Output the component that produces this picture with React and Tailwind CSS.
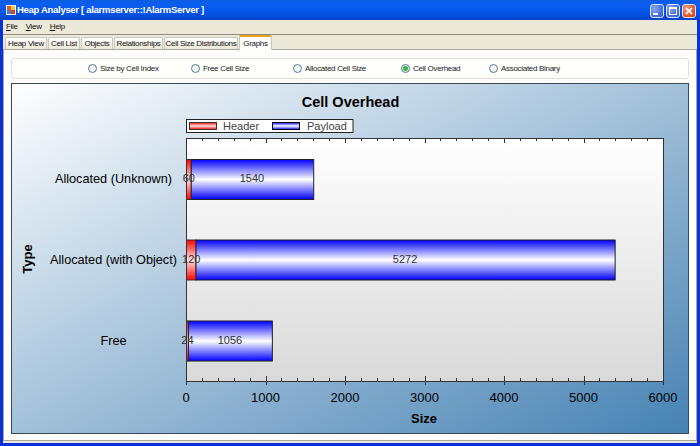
import React from 'react'

const TABS = [
  { label: 'Heap View', width: 'w-[42px]' },
  { label: 'Cell List', width: 'w-[32px]' },
  { label: 'Objects', width: 'w-[32px]' },
  { label: 'Relationships', width: 'w-[49px]' },
  { label: 'Cell Size Distributions', width: 'w-[74px]' },
]

const RADIOS = [
  { label: 'Size by Cell Index', width: 'w-[103px]' },
  { label: 'Free Cell Size', width: 'w-[102px]' },
  { label: 'Allocated Cell Size', width: 'w-[108px]' },
  { label: 'Cell Overhead', width: 'w-[88px]', checked: true },
  { label: 'Associated Binary', width: 'w-[90px]' },
]

const BARS = [
  { name: 'Allocated (Unknown)', y: 159, header: 60, payload: 1540 },
  { name: 'Allocated (with Object)', y: 239.5, header: 120, payload: 5272 },
  { name: 'Free', y: 320.5, header: 24, payload: 1056 },
]

const X0 = 186
const PX = 477 / 6000
const TOP = 138
const BOTTOM = 381

function WinButton({ close, children }) {
  return (
    <div className={`w-[14px] h-[14px] rounded-[3px] border border-[#dfe6fa] flex items-center justify-center ${
      close
        ? 'bg-[radial-gradient(circle_at_30%_30%,#f0a080,#e0592f_60%,#c8401c)]'
        : 'bg-[radial-gradient(circle_at_30%_30%,#8ba8f2,#4a70e0_60%,#3459d0)]'
    }`}>
      {children}
    </div>
  )
}

function Radio({ checked }) {
  return (
    <span className="w-[9px] h-[9px] rounded-full border border-[#4e7ca6] bg-[#f4f4ee] flex items-center justify-center flex-shrink-0">
      {checked && <span className="w-[5px] h-[5px] rounded-full bg-[#3fb23f]" />}
    </span>
  )
}

function Chart() {
  const minor = []
  for (let v = 0; v <= 6000; v += 200) minor.push(v)
  return (
    <svg viewBox="12 84 676 350" className="block w-[676px] h-[350px]">
      <defs>
        <linearGradient id="plot" x1="0" y1="0" x2="0" y2="1">
          <stop offset="0" stopColor="#ffffff" />
          <stop offset="1" stopColor="#d9d9d9" />
        </linearGradient>
        <linearGradient id="blue" x1="0" y1="0" x2="0" y2="1">
          <stop offset="0" stopColor="#0000ff" />
          <stop offset="0.5" stopColor="#ffffff" />
          <stop offset="1" stopColor="#0000ff" />
        </linearGradient>
        <linearGradient id="red" x1="0" y1="0" x2="0" y2="1">
          <stop offset="0" stopColor="#ff0000" />
          <stop offset="0.5" stopColor="#ffe0e0" />
          <stop offset="1" stopColor="#ff0000" />
        </linearGradient>
      </defs>

      <text x="350.5" y="107" textAnchor="middle" fontSize="14.5" fontWeight="700" fill="#000">Cell Overhead</text>

      {/* Legend */}
      <rect x="186.5" y="119.5" width="166.5" height="13" fill="#fff" stroke="#222" />
      <rect x="189.5" y="122.5" width="27" height="7" fill="url(#red)" stroke="#333" />
      <text x="223" y="130" fontSize="11" fill="#444">Header</text>
      <rect x="272.5" y="122.5" width="27" height="7" fill="url(#blue)" stroke="#000" />
      <text x="307" y="130" fontSize="11" fill="#444">Payload</text>

      {/* Plot area */}
      <rect x={X0 + 0.5} y={TOP + 0.5} width="477" height={BOTTOM - TOP} fill="url(#plot)" stroke="#333" />

      {minor.map(v => {
        const x = Math.round(X0 + v * PX) + 0.5
        const major = v % 1000 === 0
        return (
          <g key={v} stroke="#333">
            <line x1={x} x2={x} y1={TOP} y2={TOP + (major ? 5 : 3)} />
            <line x1={x} x2={x} y1={BOTTOM - (major ? 5 : 3)} y2={BOTTOM + (major ? 4 : 1)} />
          </g>
        )
      })}

      {[0, 1000, 2000, 3000, 4000, 5000, 6000].map(v => (
        <text key={v} x={X0 + v * PX} y="402" textAnchor="middle" fontSize="13" fill="#000">{v}</text>
      ))}

      {BARS.map(b => {
        const hw = b.header * PX
        const pw = b.payload * PX
        return (
          <g key={b.name}>
            <rect x={X0 + 0.5} y={b.y + 0.5} width={hw} height="40" fill="url(#red)" stroke="#333" />
            <rect x={X0 + 0.5 + hw} y={b.y + 0.5} width={pw} height="40" fill="url(#blue)" stroke="#222" />
            <text x={X0 + hw / 2 + 0.5} y={b.y + 23} textAnchor="middle" fontSize="11" fill="#333">{b.header}</text>
            <text x={X0 + hw + pw / 2} y={b.y + 23} textAnchor="middle" fontSize="11" fill="#333">{b.payload}</text>
            <text x="113.5" y={b.y + 24} textAnchor="middle" fontSize="12.7" fill="#000">{b.name}</text>
          </g>
        )
      })}

      <text x="424" y="423" textAnchor="middle" fontSize="13" fontWeight="700" fill="#000">Size</text>
      <text transform="translate(32 259) rotate(-90)" textAnchor="middle" fontSize="13" fontWeight="700" fill="#000">Type</text>
    </svg>
  )
}

export default function App() {
  return (
    <div className="w-[700px] h-[446px] overflow-hidden flex flex-col font-['Liberation_Sans',sans-serif] bg-[#0831d9]">
      {/* Title bar */}
      <div className="h-[20px] flex items-center pl-[6px] pr-[4px] bg-[linear-gradient(to_bottom,#0a5bdf,#0a5ef0_20%,#0352e4_70%,#0340c8)] flex-shrink-0">
        <svg width="10" height="10" viewBox="0 0 10 10" className="flex-shrink-0">
          <rect width="10" height="10" fill="#f4f1e0" />
          <rect x="1" y="1" width="4" height="4" fill="#e25b2a" />
          <rect x="5" y="1" width="4" height="4" fill="#f2c14a" />
          <rect x="1" y="5" width="4" height="4" fill="#3f7fd8" />
          <rect x="5" y="5" width="4" height="4" fill="#d8402a" />
        </svg>
        <span className="ml-[1px] text-[9.5px] tracking-[-0.3px] leading-none font-bold text-white whitespace-nowrap">Heap Analyser [ alarmserver::!AlarmServer ]</span>
        <div className="ml-auto flex gap-[2px] mt-[1px]">
          <WinButton><span className="w-[5px] h-[2px] bg-white mt-[7px] mr-[3px]" /></WinButton>
          <WinButton><span className="w-[8px] h-[8px] border border-white border-t-2" /></WinButton>
          <WinButton close>
            <svg width="8" height="8" viewBox="0 0 8 8"><path d="M1 1l6 6M7 1L1 7" stroke="#fff" strokeWidth="1.7" /></svg>
          </WinButton>
        </div>
      </div>

      {/* Window body */}
      <div className="flex-1 mx-[3px] mb-[3px] bg-[#ece9d8] flex flex-col min-h-0">
        <div className="h-[14px] flex items-center gap-[8px] pl-[3px] text-[8px] tracking-[-0.3px] text-[#111] border-b border-[#8e8c7f] box-content">
          <span><span className="underline">F</span>ile</span>
          <span><span className="underline">V</span>iew</span>
          <span><span className="underline">H</span>elp</span>
        </div>

        {/* Tabs */}
        <div className="h-[14px] flex items-end pl-[2px] gap-[1px] text-[8px] tracking-[-0.3px] text-[#111] flex-shrink-0">
          {TABS.map(t => (
            <div key={t.label} className={`${t.width} h-[12px] flex items-center justify-center whitespace-nowrap rounded-t-[2px] border border-b-0 border-[#c9c7ba] bg-[linear-gradient(to_bottom,#ffffff,#ece9d8)]`}>
              {t.label}
            </div>
          ))}
          <div className="w-[33px] h-[15px] -mb-[1px] relative z-10 flex items-center justify-center rounded-t-[2px] border-x border-[#c9c7ba] border-t-2 border-t-[#f0a020] bg-white">
            Graphs
          </div>
        </div>

        {/* Tab page */}
        <div className="flex-1 min-h-0 flex flex-col bg-[#fcfcfa] border border-[#a8a799] mb-[2px] px-[7px] pt-[8px] pb-[6px] gap-[4px]">
          <div className="h-[21px] flex-shrink-0 flex items-center pl-[76px] rounded-[3px] border border-[#e2e0d4] bg-[#fffffc] text-[8px] tracking-[-0.3px] text-[#222]">
            {RADIOS.map(r => (
              <div key={r.label} className={`${r.width} flex items-center gap-[3px] whitespace-nowrap`}>
                <Radio checked={r.checked} />
                <span>{r.label}</span>
              </div>
            ))}
          </div>
          <div className="flex-1 min-h-0 border border-[#3a4a55] overflow-hidden bg-[linear-gradient(to_bottom_right,#ffffff,#4682b4)]">
            <Chart />
          </div>
        </div>
      </div>
    </div>
  )
}
